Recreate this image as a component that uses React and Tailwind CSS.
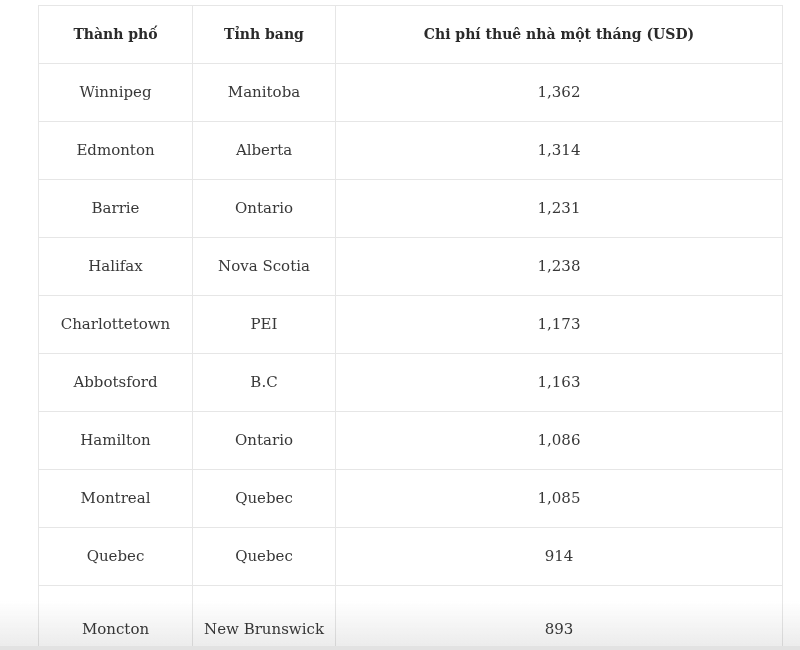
const rows = [
  ["Winnipeg", "Manitoba", "1,362"],
  ["Edmonton", "Alberta", "1,314"],
  ["Barrie", "Ontario", "1,231"],
  ["Halifax", "Nova Scotia", "1,238"],
  ["Charlottetown", "PEI", "1,173"],
  ["Abbotsford", "B.C", "1,163"],
  ["Hamilton", "Ontario", "1,086"],
  ["Montreal", "Quebec", "1,085"],
  ["Quebec", "Quebec", "914"],
];

export default function App() {
  return (
    <div
      className="relative w-[800px] h-[650px] overflow-hidden bg-white pt-[5px] pl-[38px]"
      style={{ fontFamily: '"DejaVu Serif", "Liberation Serif", serif' }}
    >
      <table className="w-[745px] border-collapse text-center text-[15px] text-[#383838]">
        <thead>
          <tr className="h-[58px]">
            <th className="w-[154px] border border-[#e6e6e6] text-[14px] font-bold text-[#2a2a2a]">Thành phố</th>
            <th className="w-[143px] border border-[#e6e6e6] text-[14px] font-bold text-[#2a2a2a]">Tỉnh bang</th>
            <th className="border border-[#e6e6e6] text-[14px] font-bold text-[#2a2a2a]">Chi phí thuê nhà một tháng (USD)</th>
          </tr>
        </thead>
        <tbody>
          {rows.map((r) => (
            <tr key={r[0]} className="h-[58px]">
              <td className="border border-[#e6e6e6]">{r[0]}</td>
              <td className="border border-[#e6e6e6]">{r[1]}</td>
              <td className="border border-[#e6e6e6]">{r[2]}</td>
            </tr>
          ))}
          <tr className="h-[88px]">
            <td className="border border-[#e6e6e6]">Moncton</td>
            <td className="border border-[#e6e6e6]">New Brunswick</td>
            <td className="border border-[#e6e6e6]">893</td>
          </tr>
        </tbody>
      </table>
      {/* bottom fade shadow */}
      <div className="pointer-events-none absolute left-0 right-0 bottom-[4px] h-[45px] bg-gradient-to-b from-transparent to-[#ececec] mix-blend-multiply" />
      <div className="absolute left-0 right-0 bottom-0 h-[4px] bg-[#e2e2e2]" />
    </div>
  );
}
